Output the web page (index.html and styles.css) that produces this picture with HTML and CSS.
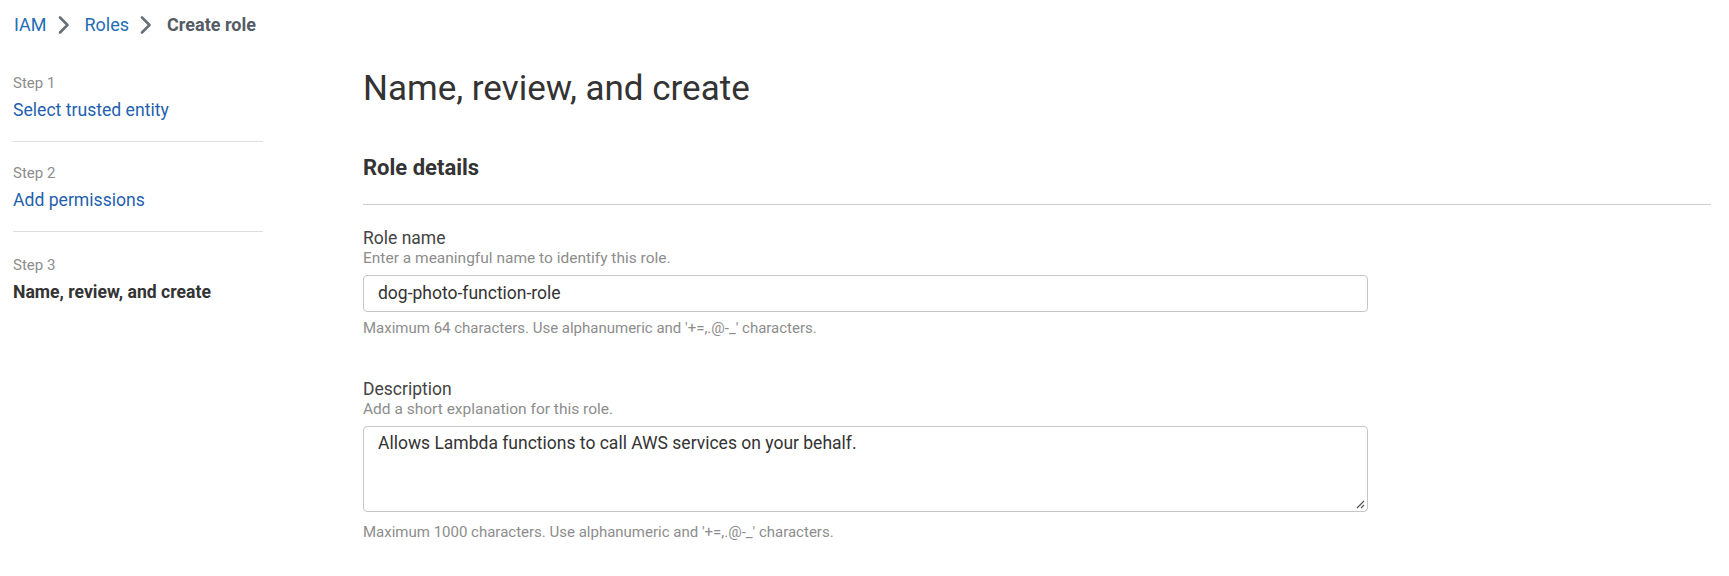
FILE: index.html
```html
<!DOCTYPE html>
<html lang="en">
<head>
<meta charset="utf-8">
<title>Create role</title>
<link rel="stylesheet" href="styles.css">
</head>
<body>
<nav class="breadcrumb">
  <a class="crumb-link" href="#">IAM</a>
  <svg class="chev" width="14" height="20" viewBox="0 0 14 20"><path d="M3 2.5 L10.5 10 L3 17.5" fill="none" stroke="#687078" stroke-width="2.6" stroke-linecap="round" stroke-linejoin="round"/></svg>
  <a class="crumb-link" href="#">Roles</a>
  <svg class="chev" width="14" height="20" viewBox="0 0 14 20"><path d="M3 2.5 L10.5 10 L3 17.5" fill="none" stroke="#687078" stroke-width="2.6" stroke-linecap="round" stroke-linejoin="round"/></svg>
  <span class="crumb-current">Create role</span>
</nav>
<div class="layout">
  <aside class="steps">
    <div class="step">
      <div class="step-num">Step 1</div>
      <a class="step-link" href="#">Select trusted entity</a>
    </div>
    <div class="step">
      <div class="step-num">Step 2</div>
      <a class="step-link" href="#">Add permissions</a>
    </div>
    <div class="step last">
      <div class="step-num">Step 3</div>
      <div class="step-current">Name, review, and create</div>
    </div>
  </aside>
  <main class="content">
    <h1 class="page-title">Name, review, and create</h1>
    <h2 class="section-title">Role details</h2>
    <div class="field first">
      <label class="field-label">Role name</label>
      <div class="field-desc">Enter a meaningful name to identify this role.</div>
      <div class="input">dog-photo-function-role</div>
      <div class="field-hint">Maximum 64 characters. Use alphanumeric and '+=,.@-_' characters.</div>
    </div>
    <div class="field">
      <label class="field-label">Description</label>
      <div class="field-desc">Add a short explanation for this role.</div>
      <div class="textarea">Allows Lambda functions to call AWS services on your behalf.
        <svg class="grip" width="10" height="10" viewBox="0 0 10 10"><path d="M9 2 L2 9 M9 6 L6 9" stroke="#555" stroke-width="1.2"/></svg>
      </div>
      <div class="field-hint lower">Maximum 1000 characters. Use alphanumeric and '+=,.@-_' characters.</div>
    </div>
  </main>
</div>
</body>
</html>
```
FILE: styles.css
```css
* { box-sizing: border-box; }
html, body { margin: 0; background: #fff; }
body {
  font-family: Roboto, "Open Sans", "Liberation Sans", sans-serif;
  color: #333;
}
a { text-decoration: none; }

.breadcrumb {
  display: flex;
  align-items: center;
  padding: 13px 0 0 14px;
  height: 37px;
  font-size: 18px;
  line-height: 24px;
}
.crumb-link { color: #1f6db3; }
.chev { margin: 0 14px 0 10px; }
.crumb-current { color: #545b64; font-weight: 700; }

.layout {
  display: grid;
  grid-template-columns: 250px 1fr;
  column-gap: 100px;
  padding: 0 18px 0 13px;
}

.steps { padding-top: 29px; }
.step {
  border-bottom: 1px solid #dfdfdf;
  padding: 7px 0 18px;
}
.step + .step { padding-top: 21px; }
.step.last { border-bottom: none; padding-top: 23px; }
.step-num {
  font-size: 15px;
  line-height: 20px;
  color: #8d8d8d;
}
.step-link, .step-current {
  display: block;
  font-size: 17.6px;
  line-height: 26px;
  margin-top: 4px;
}
.step-link { color: #1f5fae; }
.step-current { color: #333; font-weight: 700; }

.page-title {
  margin: 0;
  padding-top: 30px;
  font-size: 35px;
  line-height: 44px;
  font-weight: 400;
  color: #333;
}
.section-title {
  margin: 0;
  padding-top: 43px;
  padding-bottom: 22px;
  font-size: 22px;
  line-height: 28px;
  font-weight: 700;
  color: #333;
  border-bottom: 1px solid #cfcfcf;
}
.field { width: 1005px; }
.field.first { padding-top: 22px; }
.field + .field { padding-top: 41px; }
.field-label {
  display: block;
  font-size: 17.5px;
  line-height: 22px;
  color: #444;
}
.field-desc {
  font-size: 15.5px;
  line-height: 18px;
  color: #8d8d8d;
}
.input, .textarea {
  position: relative;
  margin-top: 8px;
  border: 1px solid #c6c6c6;
  border-radius: 4px;
  font-size: 17.5px;
  color: #333;
  padding: 0 14px;
}
.input { height: 37px; line-height: 35px; }
.textarea { height: 86px; line-height: 24px; padding-top: 4px; }
.grip { position: absolute; right: 2px; bottom: 2px; }
.field-hint {
  margin-top: 7px;
  font-size: 15px;
  line-height: 18px;
  color: #8d8d8d;
}
.field-hint.lower { margin-top: 11px; }
```
